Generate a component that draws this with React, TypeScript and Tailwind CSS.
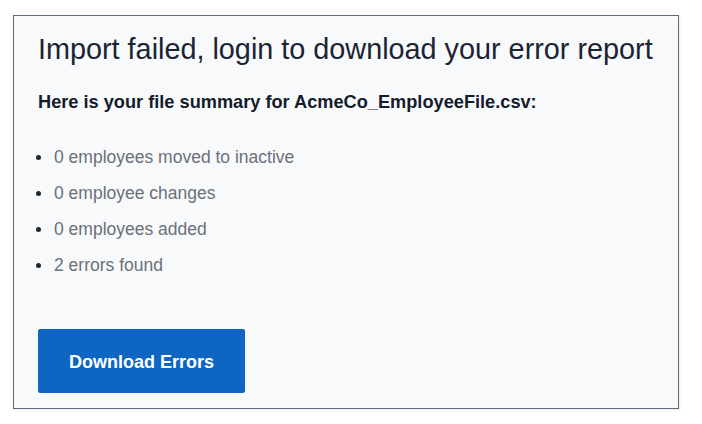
const items = [
  '0 employees moved to inactive',
  '0 employee changes',
  '0 employees added',
  '2 errors found',
];

export default function App() {
  return (
    <div className="min-h-[424px] w-[702px] bg-white pt-[15px] pl-[13px] font-['Liberation_Sans',Arial,sans-serif]">
      <div className="w-[666px] h-[394px] border border-[#5d6b7c] bg-[#f8f9fb] shadow-[1px_1px_2px_rgba(0,0,0,0.08)] px-[24px] pt-[18px]">
        <h1 className="whitespace-nowrap text-[28.8px] leading-[30px] text-[#1b2433]">
          Import failed, login to download your error report
        </h1>
        <p className="mt-[27px] whitespace-nowrap text-[18.2px] leading-[22px] font-bold text-[#141c2b]">
          Here is your file summary for AcmeCo_EmployeeFile.csv:
        </p>
        <ul className="mt-[34px] flex flex-col gap-[16px]">
          {items.map((t) => (
            <li key={t} className="flex items-center text-[17.5px] leading-[20px] text-[#6b7079]">
              <span className="-ml-[2px] mr-[13px] h-[5px] w-[5px] rounded-full bg-[#1b2433]" />
              {t}
            </li>
          ))}
        </ul>
        <button className="mt-[54px] h-[64px] w-[207px] rounded-[2px] bg-[#0f65c2] pt-[3px] text-[18px] font-bold text-white">
          Download Errors
        </button>
      </div>
    </div>
  );
}
